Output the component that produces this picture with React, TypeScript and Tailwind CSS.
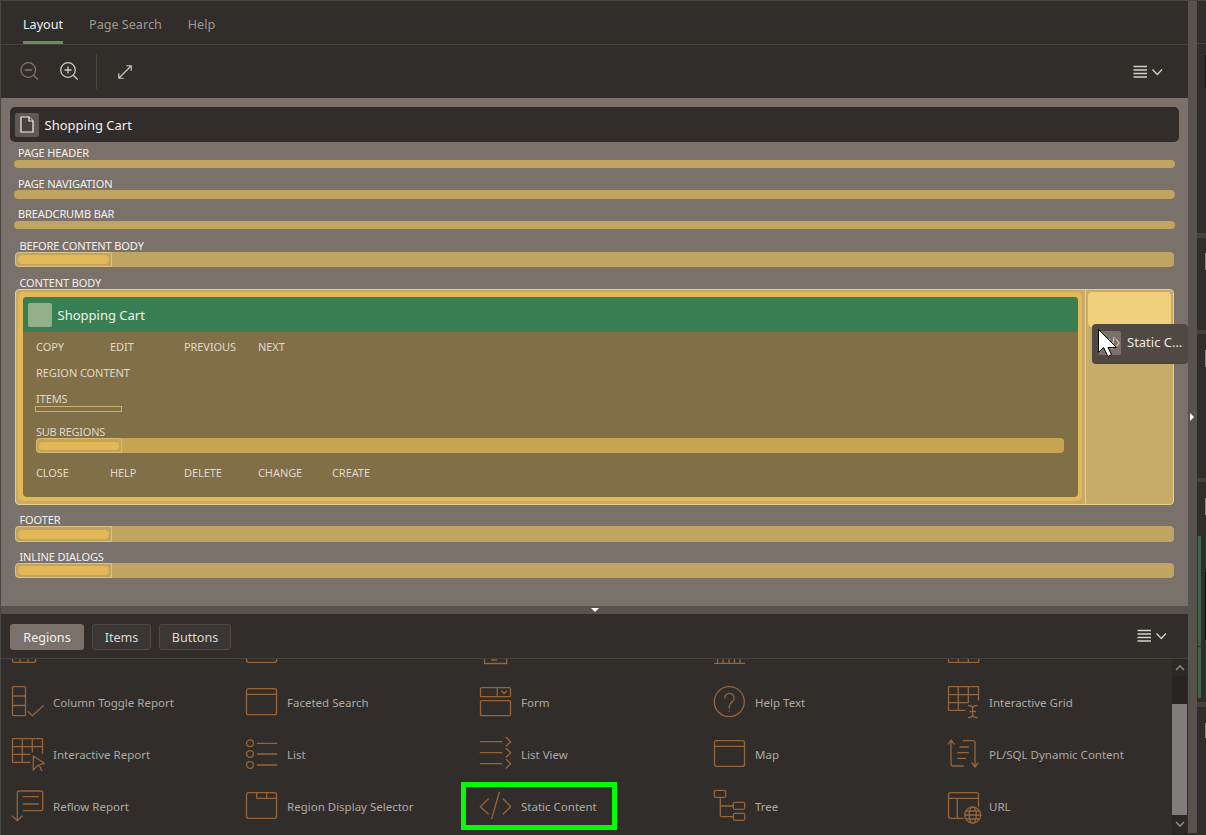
import type { ReactNode } from "react";

const FONT = "[font-family:'Noto_Sans','Open_Sans',sans-serif]";

const Ico = ({ children }: { children: ReactNode }) => (
  <svg
    width="34"
    height="34"
    viewBox="0 0 34 34"
    fill="none"
    stroke="#96653a"
    strokeWidth="1.3"
    strokeLinecap="round"
    strokeLinejoin="round"
    className="shrink-0 overflow-visible"
  >
    {children}
  </svg>
);

const ITEMS: { label: string; icon: ReactNode; highlight?: boolean }[] = [
  {
    label: "",
    icon: (
      <Ico>
        <path d="M.5 20v6.3a2 2 0 0 0 2 2H21.7a2 2 0 0 0 2-2V20M8 20v8.3M16 20v8.3M.5 21H23.7" />
      </Ico>
    ),
  },
  {
    label: "",
    icon: (
      <Ico>
        <path d="M.5 20v6.3a2 2 0 0 0 2 2H28.7a2 2 0 0 0 2-2V20" />
      </Ico>
    ),
  },
  {
    label: "",
    icon: (
      <Ico>
        <path d="M4.5 20V29.5H26.7V20M11.7 26H16.7" />
      </Ico>
    ),
  },
  {
    label: "",
    icon: (
      <Ico>
        <path d="M.5 29.3H30.7M3.5 24V29.3M9 24V29.3M15 24V29.3M20.5 24V29.3M26 24V29.3" />
      </Ico>
    ),
  },
  {
    label: "",
    icon: (
      <Ico>
        <path d="M.5 20V28.3H30.7V20M10.3 20V28.3M20.3 20V28.3" />
      </Ico>
    ),
  },
  {
    label: "Column Toggle Report",
    icon: (
      <Ico>
        <rect x=".5" y=".7" width="13" height="29" rx="1" />
        <path d="M.5 10H13.5M.5 19.5H13.5M16.3 25.7L20.3 29.7L31.3 19.7" />
      </Ico>
    ),
  },
  {
    label: "Faceted Search",
    icon: (
      <Ico>
        <rect x=".5" y="2.7" width="30" height="26" rx="2" />
        <path d="M.5 8.3H30.5" />
      </Ico>
    ),
  },
  {
    label: "Form",
    icon: (
      <Ico>
        <rect x=".5" y="1.7" width="30" height="9" rx="1" />
        <rect x=".5" y="14.7" width="30" height="15" rx="1" />
        <path d="M17.3 1.7V10.7M21.7 5L24.2 7.5L26.7 5" />
      </Ico>
    ),
  },
  {
    label: "Help Text",
    icon: (
      <Ico>
        <circle cx="15.3" cy="15.7" r="15" />
        <path d="M10.7 12a4.7 4.7 0 1 1 7.4 3.9c-1.7 1.2-2.8 2.2-2.8 4.1v2" />
        <path d="M15.3 24.8V25.2" />
      </Ico>
    ),
  },
  {
    label: "Interactive Grid",
    icon: (
      <Ico>
        <path d="M17 24.3H.5V.7H30.5V14M.5 8.7H30.5M.5 16.7H20.3M10.3 .7V24.3M20.3 .7V16.7" />
        <path d="M20.5 19.5C23 19.5 24.7 20.5 24.7 22.5V28.5C24.7 30.5 23 31.5 20.5 31.5M29 19.5C26.5 19.5 24.7 20.5 24.7 22.5M29 31.5C26.5 31.5 24.7 30.5 24.7 28.5M22 25.5H27.5" />
      </Ico>
    ),
  },
  {
    label: "Interactive Report",
    icon: (
      <Ico>
        <path d="M18 24.3H.5V.7H30.5V15M.5 8.7H30.5M.5 16.3H18M10.3 .7V24.3M20.3 .7V14" />
        <path d="M21.3 18V32L26 27.3M21.3 18L32.3 25.3L27 27L29.7 32.5" />
      </Ico>
    ),
  },
  {
    label: "List",
    icon: (
      <Ico>
        <circle cx="4" cy="5.3" r="3.4" />
        <circle cx="4" cy="16" r="3.4" />
        <circle cx="4" cy="27" r="3.4" />
        <path d="M11.3 5.3H30.7M11.3 16H30.7M11.3 27H30.7" />
      </Ico>
    ),
  },
  {
    label: "List View",
    icon: (
      <Ico>
        <path d="M.3 3.7H21.7M.3 14.7H21.7M.3 25.7H21.7" />
        <path d="M26.3 -.5L30.7 3.7L26.3 8M26.3 10.5L30.7 14.7L26.3 19M26.3 21.5L30.7 25.7L26.3 30" />
      </Ico>
    ),
  },
  {
    label: "Map",
    icon: (
      <Ico>
        <rect x=".5" y="2.7" width="30" height="25.6" rx="2" />
        <path d="M.5 8.3H30.5" />
      </Ico>
    ),
  },
  {
    label: "PL/SQL Dynamic Content",
    icon: (
      <Ico>
        <path d="M.3 6L3 2L6 6M3 2V26a2 2 0 0 0 2 2H15.3M15.3 2.7H25a2 2 0 0 1 2 2V29M24 25L27 29L30 25" />
        <path d="M12 9H20.3M9.7 14.7H20.3M9.7 20.3H17.5" />
      </Ico>
    ),
  },
  {
    label: "Reflow Report",
    icon: (
      <Ico>
        <path d="M5.3 30.7V3a2 2 0 0 1 2-2H28.7a2 2 0 0 1 2 2V18.7a2 2 0 0 1-2 2H11.3M.3 26L5.3 30.7L10 26M11.3 6.7H26.3M11.3 14H26.3" />
      </Ico>
    ),
  },
  {
    label: "Region Display Selector",
    icon: (
      <Ico>
        <rect x=".5" y="2.7" width="30" height="25.6" rx="2" />
        <path d="M10.7 8.3H30.5M10.7 2.7V8.3M20.7 2.7V8.3" />
      </Ico>
    ),
  },
  {
    label: "Static Content",
    highlight: true,
    icon: (
      <Ico>
        <path d="M8.3 9L.3 16.7L8.3 24M23.3 9L30.7 16.7L23.3 24M19.3 2.3L11.7 28.7" />
      </Ico>
    ),
  },
  {
    label: "Tree",
    icon: (
      <Ico>
        <rect x=".3" y=".3" width="11.4" height="7" rx="1.5" />
        <rect x="19.3" y="12.3" width="11.4" height="7" rx="1.5" />
        <rect x="19.3" y="23.3" width="11.4" height="7" rx="1.5" />
        <path d="M6.3 7.3V25a1.7 1.7 0 0 0 1.7 1.7H19.3M6.3 16H19.3" />
      </Ico>
    ),
  },
  {
    label: "URL",
    icon: (
      <Ico>
        <path d="M30.5 16.5V4.7a2 2 0 0 0-2-2H2.5a2 2 0 0 0-2 2V26.3a2 2 0 0 0 2 2H15.3M.5 8.3H30.5M9.3 8.3V28.3" />
        <circle cx="24.7" cy="25" r="8" />
        <ellipse cx="24.7" cy="25" rx="3.6" ry="8" />
        <path d="M16.7 25H32.7M18 21H31.4M18 29H31.4" />
      </Ico>
    ),
  },
];

const MenuIcon = () => (
  <svg width="32" height="14" viewBox="0 0 32 14" fill="none" stroke="#d4d1cc" strokeWidth="1.4">
    <path d="M.5 1.5H14M.5 5H14M.5 8.5H14M.5 12H14" />
    <path d="M19.5 4.5L24.3 9.5L29 4.5" strokeWidth="1.3" />
  </svg>
);

const Label = ({ children, h = "h-[13px] pt-[2px]", pl }: { children: string; h?: string; pl: string }) => (
  <div className={`${h} ${pl} flex items-center text-[11px] tracking-[-0.12px] text-[#f4f1ec] whitespace-nowrap`}>
    {children}
  </div>
);

// wide bar with the little "drop slot" at its left end
const SlotBar = ({ h }: { h: string }) => (
  <div className={`${h} mx-[14px] rounded-[4px] bg-[#c0a462]`}>
    <div className="flex h-full w-[97px] items-center rounded-l-[4px] border border-[#dcc27c] px-[2px]">
      <div className="h-[9px] w-[91px] rounded-full bg-[#e2b858]" />
    </div>
  </div>
);

const Cells = ({ items }: { items: string[] }) => (
  <div className="grid h-[14px] grid-cols-[repeat(5,74px)] items-center pl-[13px] text-[11px] tracking-[-0.08px] whitespace-nowrap text-[#e0d9c8]">
    {items.map((t) => (
      <span key={t}>{t}</span>
    ))}
  </div>
);

const Seg = ({ h, left, right, className = "" }: { h: string; left?: string; right?: string; className?: string }) => (
  <div className={`${h} ${className} flex justify-between`}>
    <div className={left ?? ""} />
    <div className={right ?? ""} />
  </div>
);

export default function App() {
  return (
    <div className={`${FONT} flex h-[835px] w-[1206px] overflow-hidden border-t border-l border-[#4a4641] bg-[#312d2a]`}>
      {/* left panel */}
      <div className="flex w-[1187px] shrink-0 flex-col">
        {/* tabs */}
        <div className="flex h-[44px] shrink-0 gap-[26px] border-b border-[#45413c] pl-[22px] text-[12.6px] text-[#9d9993]">
          <div className="flex h-[43px] items-center border-b-[3px] border-[#6c8c5c] pt-[8px] text-[#f2efea]">Layout</div>
          <div className="flex h-[43px] items-center pt-[5px]">Page Search</div>
          <div className="flex h-[43px] items-center pt-[5px]">Help</div>
        </div>

        {/* toolbar */}
        <div className="flex h-[53px] shrink-0 items-center justify-between pr-[23px]">
          <div className="flex items-center">
            <svg width="20" height="20" viewBox="0 0 20 20" fill="none" stroke="#7d7872" strokeWidth="1.3" className="ml-[19px]">
              <circle cx="8.3" cy="8" r="7.3" />
              <path d="M13.5 13.2L18 17.5M4.8 8H11.8" />
            </svg>
            <svg width="20" height="20" viewBox="0 0 20 20" fill="none" stroke="#cfccc7" strokeWidth="1.3" className="ml-[20px]">
              <circle cx="8" cy="8" r="7.3" />
              <path d="M13.2 13.2L17.7 17.5M4.5 8H11.5M8 4.5V11.5" />
            </svg>
            <div className="ml-[16px] h-[35px] w-px bg-[#4a4641]" />
            <svg width="16" height="16" viewBox="0 0 18 18" fill="none" stroke="#cfccc7" strokeWidth="1.3" className="ml-[20px]">
              <path d="M2 16L16 2M10.5 2H16V7.5M2 10.5V16H7.5" />
            </svg>
          </div>
          <MenuIcon />
        </div>

        {/* canvas */}
        <div className="h-[508px] shrink-0 bg-[#7a716b] pt-[9px] text-[#f4f1ec]">
          <div className="ml-[9px] flex h-[35px] w-[1169px] items-center rounded-[5px] bg-[#312d2a] pl-[5px] text-[13px]">
            <div className="flex h-[24px] w-[24px] items-center justify-center rounded-[2px] bg-[#5e5954]">
              <svg width="14" height="17" viewBox="0 0 14 17" fill="#45413d" stroke="#f4f2ee" strokeWidth="1.2">
                <path d="M1 1H9L13 5V16H1Z" />
                <path d="M9 1V5H13" />
              </svg>
            </div>
            <span className="ml-[5.5px] pt-[2px]">Shopping Cart</span>
          </div>

          <div className="mt-[4px]">
            <Label h="h-[14px]" pl="pl-[17px]">PAGE HEADER</Label>
            <div className="mx-[13px] h-[8px] rounded-full bg-[#c0a462]" />
          </div>
          <div className="mt-[9px]">
            <Label pl="pl-[17px]">PAGE NAVIGATION</Label>
            <div className="mx-[13px] h-[9px] rounded-full bg-[#c0a462]" />
          </div>
          <div className="mt-[8px]">
            <Label h="h-[14px]" pl="pl-[17px]">BREADCRUMB BAR</Label>
            <div className="mx-[13px] h-[8px] rounded-full bg-[#c0a462]" />
          </div>
          <div className="mt-[10px]">
            <Label pl="pl-[18.5px]">BEFORE CONTENT BODY</Label>
            <SlotBar h="h-[15px]" />
          </div>

          <div className="mt-[9px]">
            <Label pl="pl-[18.5px]">CONTENT BODY</Label>
            <div className="mx-[14px] flex h-[216px] rounded-[4px] border border-[#e6cd88] bg-[#c7ab68]">
              <div className="flex-1 pt-[2px] pr-[3px] pb-[3px] pl-[2px]">
                <div className="h-[209px] rounded-[5px] bg-[#e2b858] pt-[5px] pr-[3px] pb-[4px] pl-[5px]">
                  <div className="mr-[1px] h-[200px] overflow-hidden rounded-[4px] bg-[#816f48]">
                    <div className="flex h-[35px] items-center bg-[#387f54] pl-[5px] text-[13px]">
                      <div className="h-[24px] w-[24px] rounded-[2px] bg-[#93b08a]" />
                      <span className="ml-[5.5px] pt-[2px]">Shopping Cart</span>
                    </div>
                    <div className="mt-[7px]">
                      <Cells items={["COPY", "EDIT", "PREVIOUS", "NEXT"]} />
                    </div>
                    <div className="mt-[12px]">
                      <Cells items={["REGION CONTENT"]} />
                    </div>
                    <div className="mt-[13px]">
                      <div className="h-[14px] pl-[13px] text-[11px] leading-[14px] tracking-[-0.08px] text-[#e0d9c8]">ITEMS</div>
                      <div className="ml-[12px] h-[6px] w-[87px] border border-[#cdb06a]" />
                    </div>
                    <div className="mt-[13px]">
                      <div className="h-[13px] pl-[13px] text-[11px] leading-[13px] tracking-[-0.25px] text-[#e0d9c8]">SUB REGIONS</div>
                      <div className="mr-[14px] ml-[13px] h-[15px] rounded-[4px] bg-[#c7a552]">
                        <div className="flex h-full w-[86px] items-center rounded-l-[4px] border border-[#d6bc72] px-[2px]">
                          <div className="h-[8px] w-[80px] rounded-full bg-[#e2b858]" />
                        </div>
                      </div>
                    </div>
                    <div className="mt-[12px]">
                      <Cells items={["CLOSE", "HELP", "DELETE", "CHANGE", "CREATE"]} />
                    </div>
                  </div>
                </div>
              </div>
              <div className="relative w-[88px] shrink-0 border-l border-[#e6cd88] px-[2px] pt-[2px]">
                <div className="h-[35px] rounded-[4px] bg-[#f0d07a]" />
                {/* dragged component chip */}
                <div className="absolute top-[34px] left-[6px] z-10 flex h-[38px] w-[96px] items-center rounded-[4px] bg-[#4f4942] pl-[6px] text-[13px] text-[#ece8e2] shadow-[0_2px_0_#4a4540]">
                  <div className="flex h-[24px] w-[23px] items-center justify-center rounded-[2px] bg-[#7a716b] pl-[6px]">
                    <svg width="14" height="14" viewBox="0 0 14 14" fill="none" stroke="#e0c8a4" strokeWidth="1.2">
                      <path d="M4 3L1 7L4 11M10 3L13 7L10 11M8 1L6 13" />
                    </svg>
                  </div>
                  <span className="ml-[6px] whitespace-nowrap">Static C…</span>
                  <svg width="20" height="29" viewBox="0 0 20 29" className="absolute top-[5px] left-[6px]">
                    <path d="M.5 .5V23.5L5.5 18.5L10 27.5L13.5 25.5L10 18.5H18.5Z" fill="#ffffff" stroke="#000000" strokeWidth="1" />
                  </svg>
                </div>
              </div>
            </div>
          </div>

          <div className="mt-[8px]">
            <Label pl="pl-[18.5px]">FOOTER</Label>
            <SlotBar h="h-[16px]" />
          </div>
          <div className="mt-[8px]">
            <Label pl="pl-[18.5px]">INLINE DIALOGS</Label>
            <SlotBar h="h-[15px]" />
          </div>
        </div>

        {/* horizontal splitter */}
        <div className="flex h-[8px] shrink-0 justify-center bg-[#57534c] pt-[2px]">
          <svg width="8" height="4" viewBox="0 0 8 4">
            <path d="M0 0H8L4 4Z" fill="#ffffff" />
          </svg>
        </div>

        {/* component gallery */}
        <div className="flex h-[45px] shrink-0 items-center justify-between border-b border-[#45413c] pr-[19px] pl-[9px] text-[12.6px]">
          <div className="flex items-center gap-[8px] pt-[1px]">
            <div className="flex h-[26px] w-[74px] items-center justify-center rounded-[3px] bg-[#7a716b] pt-[3px] text-[#f4f1ec]">Regions</div>
            <div className="flex h-[26px] w-[59px] items-center justify-center rounded-[3px] border border-[#4f4a46] bg-[#3a3633] pt-[3px] text-[#dcd9d4]">Items</div>
            <div className="flex h-[26px] w-[72px] items-center justify-center rounded-[3px] border border-[#4f4a46] bg-[#3a3633] pt-[3px] text-[#dcd9d4]">Buttons</div>
          </div>
          <MenuIcon />
        </div>

        <div className="flex min-h-0 flex-1">
          <div className="flex w-[1171px] flex-col justify-end overflow-hidden pb-[2px]">
            <div className="grid shrink-0 auto-rows-[52px] grid-cols-[repeat(5,234px)]">
              {ITEMS.map((item, i) => (
                <div key={i} className="relative flex items-center gap-[7px] pl-[11px] text-[11.5px] text-[#aeaaa4]">
                  {item.icon}
                  <span className="whitespace-nowrap">{item.label}</span>
                  {item.highlight && (
                    <div className="absolute top-[1px] left-[-8px] h-[48px] w-[156px] border-[5px] border-[#00ff00]" />
                  )}
                </div>
              ))}
            </div>
          </div>
          {/* scrollbar */}
          <div className="flex w-[15px] flex-col bg-[#272421] pb-[2px]">
            <div className="flex h-[17px] items-center justify-center bg-[#2b2825]">
              <svg width="10" height="6" viewBox="0 0 10 6" fill="none" stroke="#8a8682" strokeWidth="1.6">
                <path d="M1 5L5 1L9 5" />
              </svg>
            </div>
            <div className="h-[28px]" />
            <div className="h-[111px] bg-[#807d7c]" />
            <div className="flex h-[18px] items-center justify-center bg-[#2b2825]">
              <svg width="10" height="6" viewBox="0 0 10 6" fill="none" stroke="#8a8682" strokeWidth="1.6">
                <path d="M1 1L5 5L9 1" />
              </svg>
            </div>
          </div>
        </div>
      </div>

      {/* vertical splitter */}
      <div className="flex h-[832px] w-[9px] shrink-0 flex-col bg-[#57534c] pt-[412px] pl-[2px]">
        <svg width="4" height="8" viewBox="0 0 4 8">
          <path d="M0 0L4 4L0 8Z" fill="#ffffff" />
        </svg>
      </div>

      {/* neighbouring panel, just peeking in */}
      <div className="flex w-[9px] shrink-0 flex-col">
        <div className="h-[43px] border-b border-[#45413c]" />
        <Seg h="h-[11px]" />
        <Seg h="h-[33px]" right="w-px bg-[#15130f]" />
        <Seg h="h-[145px]" />
        <Seg h="h-[5px]" className="bg-[#45413c]" />
        <Seg h="h-[15px]" />
        <Seg h="h-[17px]" right="w-px bg-[#8a8680]" />
        <Seg h="h-[60px]" />
        <Seg h="h-[4px]" className="bg-[#45413c]" />
        <Seg h="h-[16px]" />
        <Seg h="h-[17px]" right="w-px bg-[#8a8680]" />
        <Seg h="h-[111px]" />
        <Seg h="h-[4px]" className="bg-[#45413c]" />
        <Seg h="h-[16px]" />
        <Seg h="h-[17px]" right="w-px bg-[#8a8680]" />
        <Seg h="h-[21px]" />
        <div className="flex h-[162px] justify-between">
          <div className="ml-px flex w-[3px] flex-col gap-px">
            <div className="h-[110px] bg-[#39664b]" />
            <div className="h-[51px] bg-[#39664b]" />
          </div>
          <div className="mt-[36px] h-[68px] w-px bg-[#15130f]" />
        </div>
        <Seg h="h-[4px]" />
        <Seg h="h-[5px]" className="bg-[#45413c]" />
        <Seg h="h-[16px]" />
        <Seg h="h-[15px]" right="w-px bg-[#8a8680]" />
      </div>
    </div>
  );
}
